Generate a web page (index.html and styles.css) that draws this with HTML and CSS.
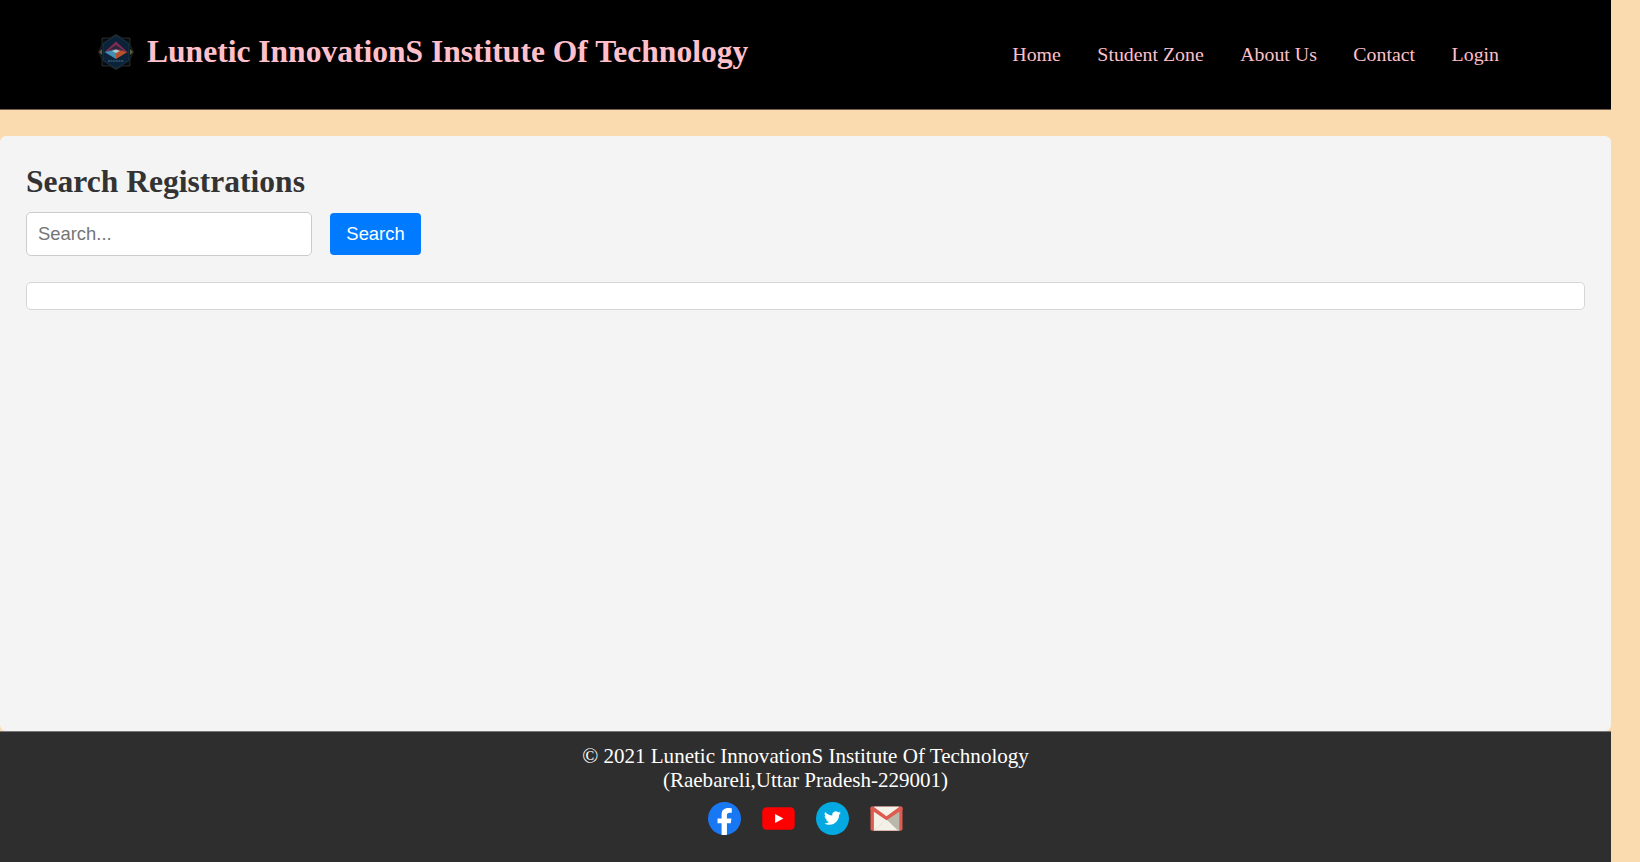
FILE: index.html
```html
<!DOCTYPE html>
<html lang="en">
<head>
<meta charset="utf-8">
<title>Lunetic InnovationS Institute Of Technology</title>
<link rel="stylesheet" href="styles.css">
</head>
<body>
<div class="page">
  <header class="header">
    <div class="brand">
      <svg class="logo" viewBox="0 0 36 36">
        <path d="M18 .5 24 4l8 0v7l3.500 7-3.500 7v7h-8L18 35.500 12 32H4v-7L.5 18 4 11V4h8z" fill="#070d12" stroke="#30352f" stroke-width=".8"/>
        <path d="M18 1.500 31 9.500v17L18 34.500 5 26.500v-17z" fill="#0b2238" stroke="#1c3446"/>
        <path d="M1 18l3-3v6zM35 18l-3-3v6z" fill="#635d3b"/>
        <path d="M18 7.500 29.500 18 18 15.500 6.500 18z" fill="#7d2c50"/>
        <path d="M18 11 25 16l-7-1-7 1z" fill="#28263f"/>
        <path d="M6.500 18 18 15.500 18 25z" fill="#438eb5"/>
        <path d="M29.500 18 18 15.500 18 25z" fill="#b8502d"/>
        <path d="m14 17 4-1.500 4 1.500-4 2z" fill="#a9d0d0"/>
        <path d="M10 27h16" stroke="#294b66" stroke-width="1.800" stroke-dasharray="2 .6"/>
      </svg>
      <h1 class="title">Lunetic InnovationS Institute Of Technology</h1>
    </div>
    <nav class="nav">
      <a>Home</a><a>Student Zone</a><a>About Us</a><a>Contact</a><a>Login</a>
    </nav>
  </header>
  <main class="panel">
    <h2 class="heading">Search Registrations</h2>
    <form class="search">
      <input class="field" type="text" placeholder="Search...">
      <button class="button" type="button">Search</button>
    </form>
    <div class="results"></div>
  </main>
  <footer class="footer">
    <p class="copy">© 2021 Lunetic InnovationS Institute Of Technology<br>(Raebareli,Uttar Pradesh-229001)</p>
    <div class="social">
      <svg class="icon" viewBox="0 0 34 34">
        <circle cx="17" cy="17" r="17" fill="#1877f2"/>
        <path d="M14 33.700V22H9.800v-5H14v-3.800c0-4.600 2.700-6.900 7-6.900 1.600 0 3.500.3 3.500.3v4.500h-2.200c-2 0-2.800 1.200-2.800 2.600V17h4.700l-.8 5h-3.900v11.700c-1.800.4-3.700.4-5.500 0z" fill="#fff"/>
      </svg>
      <svg class="icon" viewBox="0 0 34 34">
        <rect x=".3" y="5.500" width="33.400" height="23.200" rx="4.500" fill="#f00"/>
        <path d="M13.500 12.300v9.400l8.500-4.700z" fill="#fff"/>
      </svg>
      <svg class="icon" viewBox="0 0 34 34">
        <circle cx="17" cy="17" r="17" fill="#03a9e0"/>
        <path transform="translate(8.300 7.900) scale(.72)" d="M23.950 4.570a10 10 0 0 1-2.820.77 4.960 4.960 0 0 0 2.160-2.720c-.95.560-2 .960-3.130 1.190a4.920 4.920 0 0 0-8.380 4.480C7.690 8.090 4.070 6.130 1.640 3.160a4.920 4.920 0 0 0 1.520 6.570 4.900 4.900 0 0 1-2.230-.61v.06a4.920 4.920 0 0 0 3.950 4.830 5 5 0 0 1-2.210.08 4.940 4.940 0 0 0 4.600 3.420A9.870 9.870 0 0 1 0 19.540a13.990 13.990 0 0 0 7.550 2.210c9.050 0 14-7.500 14-13.980 0-.21 0-.42-.02-.63a9.940 9.940 0 0 0 2.420-2.570z" fill="#fff"/>
      </svg>
      <svg class="icon" viewBox="0 0 34 34">
        <rect x=".5" y="4.700" width="33" height="24.800" rx="1.800" fill="#dd5b4f"/>
        <path d="M4 4.700h26v24.800H4z" fill="#f4f1e9"/>
        <path d="m17 18 13-9v20.500h-1z" fill="#b9b8aa"/>
        <path d="m4 29.500 10-9" stroke="#dedbd0" stroke-width=".7"/>
        <path d="M.5 6.500c0-2 2-2.200 3.500-1.300l13 9.500 13-9.500c1.500-.9 3.500-.7 3.500 1.300v1.300L17 18.800.5 7.800z" fill="#dd5b4f"/>
      </svg>
    </div>
  </footer>
</div>
</body>
</html>
```

FILE: styles.css
```css
* { box-sizing: border-box; }
body {
  margin: 0;
  background: #fadaaf;
  font-family: "Liberation Serif", "Times New Roman", serif;
}
.page {
  display: flex;
  flex-direction: column;
  width: 1611px;
  height: 862px;
}
.header {
  display: flex;
  justify-content: space-between;
  align-items: flex-start;
  height: 110px;
  padding: 33px 112px 0 98px;
  border-bottom: 1px solid #775f50;
  background: #000;
  color: #ffc0cb;
}
.brand { display: flex; gap: 13px; }
.logo { width: 36px; height: 38px; }
.title {
  margin: 0;
  padding-top: 1px;
  font-size: 31.55px;
  line-height: 36px;
  white-space: nowrap;
}
.nav {
  display: flex;
  gap: 36.5px;
  padding-top: 9px;
  font-size: 19.85px;
  line-height: 24px;
  white-space: nowrap;
}
.panel {
  flex: 1;
  margin-top: 26px;
  padding: 28px 26px;
  border-radius: 6px;
  background: #f4f4f4;
}
.heading {
  margin: 0 0 12px;
  color: #333;
  font-size: 31.55px;
  line-height: 36px;
}
.search {
  display: flex;
  align-items: center;
  gap: 18px;
  margin: 0 0 26px;
}
.field, .button {
  font-family: "Liberation Sans", Arial, sans-serif;
  font-size: 18.4px;
}
.field {
  width: 286px;
  height: 44px;
  padding: 0 11px;
  border: 1px solid #ccc;
  border-radius: 5px;
  background: #fff;
}
.field::placeholder { color: #757575; }
.button {
  width: 91px;
  height: 42px;
  padding: 0;
  border: 0;
  border-radius: 4px;
  background: #007bff;
  color: #fff;
}
.results {
  height: 28px;
  border: 1px solid #d6d6d6;
  border-radius: 5px;
  background: #fff;
}
.footer {
  height: 131px;
  padding-top: 12px;
  border-top: 1px solid #777;
  background: #2e2e2e;
  color: #fff;
  text-align: center;
}
.copy { margin: 0; font-size: 21.05px; line-height: 24px; }
.social {
  display: flex;
  justify-content: center;
  gap: 21px;
  margin-top: 10px;
}
.icon { width: 33px; height: 33px; }
```
